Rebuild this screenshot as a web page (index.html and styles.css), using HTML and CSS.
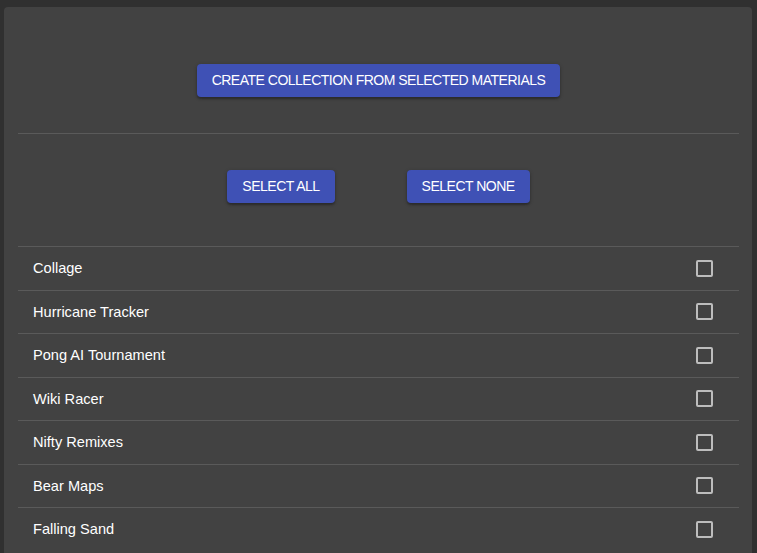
FILE: index.html
```html
<!DOCTYPE html>
<html>
<head>
<meta charset="utf-8">
<link rel="stylesheet" href="styles.css">
</head>
<body>
<div class="card">
  <div class="top">
    <button class="btn">CREATE COLLECTION FROM SELECTED MATERIALS</button>
  </div>
  <div class="divider"></div>
  <div class="selects">
    <button class="btn">SELECT ALL</button>
    <button class="btn">SELECT NONE</button>
  </div>
  <ul class="list">
    <li class="row"><span>Collage</span><span class="cb"></span></li>
    <li class="row"><span>Hurricane Tracker</span><span class="cb"></span></li>
    <li class="row"><span>Pong AI Tournament</span><span class="cb"></span></li>
    <li class="row"><span>Wiki Racer</span><span class="cb"></span></li>
    <li class="row"><span>Nifty Remixes</span><span class="cb"></span></li>
    <li class="row"><span>Bear Maps</span><span class="cb"></span></li>
    <li class="row"><span>Falling Sand</span><span class="cb"></span></li>
  </ul>
</div>
</body>
</html>
```
FILE: styles.css
```css
html, body {
  margin: 0;
  padding: 0;
  background: #303030;
  font-family: "Liberation Sans", Arial, sans-serif;
  overflow: hidden;
  height: 553px;
}
.card {
  margin: 7px 5px 0 4px;
  background: #424242;
  border-radius: 4px;
  padding: 57px 13px 0 14px;
  min-height: 600px;
}
.top {
  display: flex;
  justify-content: center;
}
.btn {
  background: #3f51b5;
  color: #fff;
  border: none;
  border-radius: 4px;
  height: 33px;
  padding: 0 15px 2px;
  font-family: "Liberation Sans", Arial, sans-serif;
  font-size: 14px;
  letter-spacing: -0.5px;
  box-shadow: 0 2px 2px rgba(0,0,0,0.25), 0 1px 4px rgba(0,0,0,0.2);
  cursor: pointer;
}
.divider {
  height: 1px;
  background: #5a5a5a;
  margin-top: 36px;
}
.selects {
  display: flex;
  justify-content: center;
  gap: 72px;
  padding: 36px 0 43px;
}
.list {
  list-style: none;
  margin: 0;
  padding: 0;
}
.row {
  display: flex;
  align-items: center;
  justify-content: space-between;
  height: 42.5px;
  border-top: 1px solid #5a5a5a;
  padding: 0 26px 0 15px;
  color: #fff;
  font-size: 14.6px;
}
.cb {
  width: 13px;
  height: 13px;
  border: 2px solid #bdbdbd;
  border-radius: 2px;
  box-sizing: content-box;
}
```
